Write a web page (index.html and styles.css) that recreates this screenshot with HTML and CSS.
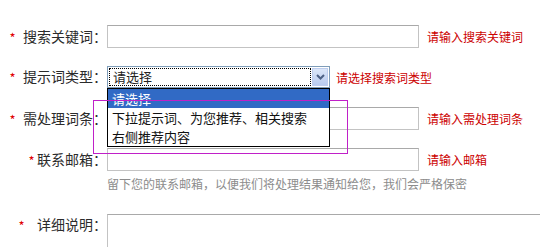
FILE: index.html
```html
<!DOCTYPE html>
<html lang="zh-CN">
<head>
<meta charset="utf-8">
<title>提交表单</title>
<link rel="stylesheet" href="styles.css">
</head>
<body>
<form class="form">
  <div class="row row-1">
    <label class="lbl"><span class="req">*</span>搜索关键词：</label>
    <div class="field"></div>
    <span class="tip">请输入搜索关键词</span>
  </div>
  <div class="row row-2">
    <label class="lbl"><span class="req">*</span>提示词类型：</label>
    <div class="select-wrap">
      <div class="select">
        <div class="select-val"><span class="select-text">请选择</span></div>
        <div class="select-btn">
          <svg width="9" height="6" viewBox="0 0 9 6"><path d="M1 1 L4.5 4.5 L8 1" fill="none" stroke="#4d6185" stroke-width="2"/></svg>
        </div>
      </div>
      <ul class="options">
        <li class="opt opt-active">请选择</li>
        <li class="opt">下拉提示词、为您推荐、相关搜索</li>
        <li class="opt">右侧推荐内容</li>
      </ul>
    </div>
    <span class="tip tip-sel">请选择搜索词类型</span>
  </div>
  <div class="row row-3">
    <label class="lbl"><span class="req">*</span>需处理词条：</label>
    <div class="field"></div>
    <span class="tip">请输入需处理词条</span>
  </div>
  <div class="row row-4">
    <label class="lbl"><span class="req req-tight">*</span>联系邮箱：</label>
    <div class="field"></div>
    <span class="tip">请输入邮箱</span>
  </div>
  <p class="hint">留下您的联系邮箱，以便我们将处理结果通知给您，我们会严格保密</p>
  <div class="row row-5">
    <label class="lbl"><span class="req req-wide">*</span>详细说明：</label>
    <div class="area"></div>
  </div>
  <div class="mark"></div>
</form>
</body>
</html>
```
FILE: styles.css
```css
html, body {
  margin: 0;
  padding: 0;
  overflow: hidden;
  background: #fff;
}
body {
  width: 540px;
  height: 247px;
  font-family: "Noto Sans CJK SC", "Noto Sans", sans-serif;
  color: #333;
}
.form {
  position: relative;
  padding-top: 25px;
}
.row {
  display: flex;
  align-items: center;
  height: 23px;
}
.row-1 { margin-bottom: 18px; }
.row-2 { margin-bottom: 19px; height: 22px; }
.row-3 { margin-bottom: 18px; }
.row-5 {
  align-items: flex-start;
  height: 32px;
  margin-top: 22px;
}
.lbl {
  width: 107px;
  flex: none;
  text-align: right;
  font-size: 14px;
  line-height: 23px;
  white-space: nowrap;
  color: #2b2b2b;
}
.row-5 .lbl { line-height: 21px; }
.req {
  display: inline-block;
  width: 7px;
  margin-right: 7px;
  text-align: center;
  color: #e00000;
  font-size: 13px;
  vertical-align: -1px;
}
.req-tight { margin-right: 2px; }
.req-wide { margin-right: 12px; }
.field {
  width: 310px;
  height: 21px;
  flex: none;
  border: 1px solid #c3c3c3;
  border-top-color: #a9a9a9;
  background: #fff;
}
.tip {
  margin-left: 8px;
  font-size: 12px;
  color: #cc0000;
  white-space: nowrap;
}
.tip-sel { margin-left: 6px; }
.select-wrap {
  position: relative;
  flex: none;
  width: 223px;
  height: 22px;
}
.select {
  display: flex;
  box-sizing: border-box;
  height: 22px;
  border: 1px solid #7f9db9;
  background: #fff;
  padding: 1px;
}
.select-val {
  flex: 1;
  border: 1px dotted #000;
  margin-right: 1px;
  display: flex;
  align-items: center;
  padding-left: 3px;
}
.select-text {
  font-size: 13px;
  line-height: 16px;
  color: #222;
}
.select-btn {
  width: 16px;
  flex: none;
  display: flex;
  align-items: center;
  justify-content: center;
  background: linear-gradient(#dbe6f8, #b9cbef);
  border: 1px solid #bdcdee;
  box-sizing: border-box;
}
.options {
  position: absolute;
  left: 0;
  top: 22px;
  width: 223px;
  box-sizing: border-box;
  margin: 0;
  padding: 0;
  list-style: none;
  border: 1px solid #000;
  background: #fff;
  z-index: 2;
}
.opt {
  height: 19px;
  line-height: 19px;
  padding-left: 4px;
  font-size: 13px;
  color: #111;
  white-space: nowrap;
}
.opt-active {
  background: #316ac5;
  color: #fff;
}
.hint {
  margin: 5px 0 0 107px;
  font-size: 12px;
  line-height: 16px;
  color: #8c8c8c;
  white-space: nowrap;
}
.area {
  width: 440px;
  height: 32px;
  flex: none;
  border: 1px solid #c3c3c3;
  border-top-color: #a9a9a9;
  border-bottom: none;
}
.mark {
  position: absolute;
  left: 93px;
  top: 100px;
  width: 253px;
  height: 52px;
  border: 1px solid #c020c8;
  z-index: 3;
  pointer-events: none;
}
```
